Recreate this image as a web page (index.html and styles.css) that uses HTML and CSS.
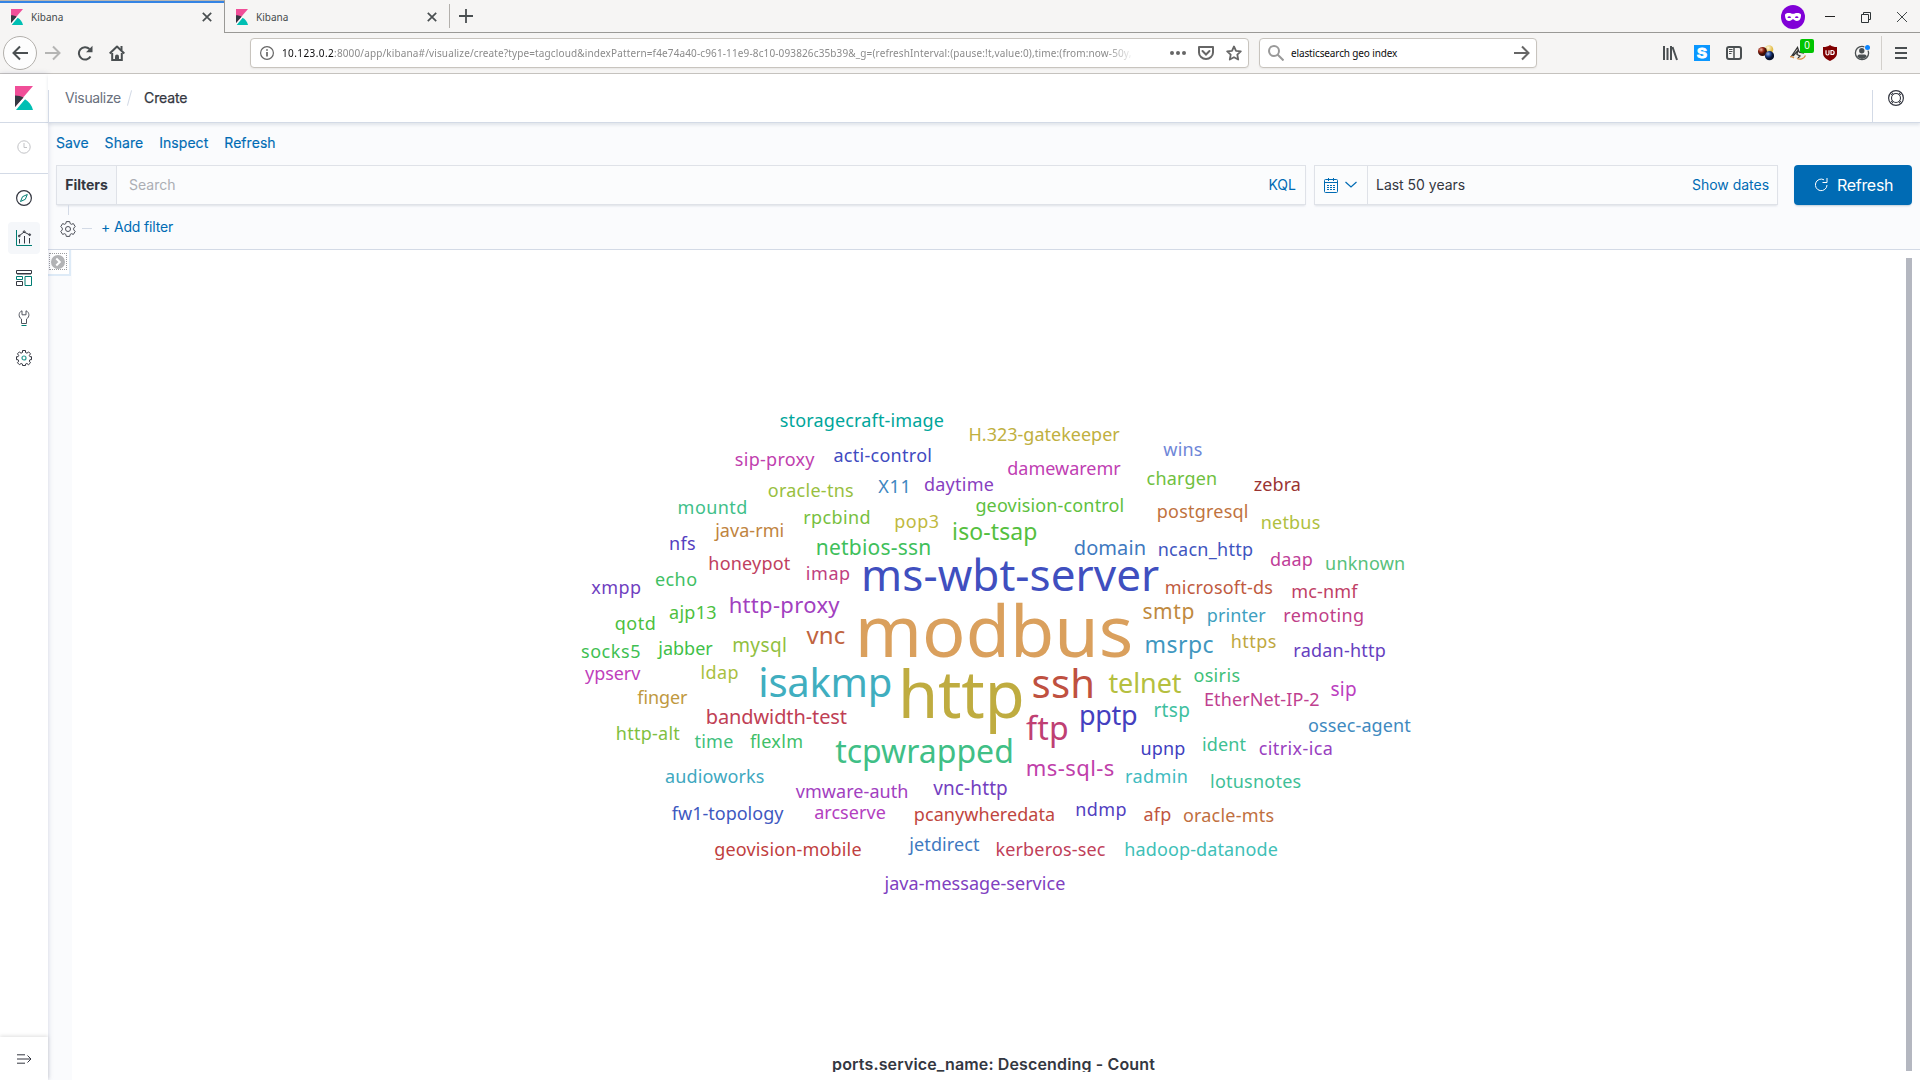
FILE: index.html
```html
<!DOCTYPE html>
<html lang="en">
<head>
<meta charset="utf-8">
<title>Kibana</title>
<link rel="stylesheet" href="styles.css">
</head>
<body>
<svg class="defs" width="0" height="0">
  <symbol id="kibana" viewBox="0 0 18 24">
    <path fill="#f04e98" d="M0 0h18L0 21z"/>
    <path fill="#343741" d="M0 9.500c3.300 0 6.400.9 8.500 2L0 21z"/>
    <path fill="#00bfb3" d="M10 13.200c3.900 2.300 7 6.200 8 10.800H1z"/>
    <path stroke="#fff" stroke-width="1.200" d="M0 22.800 10.500 11"/>
  </symbol>
  <symbol id="close" viewBox="0 0 10 10"><path d="m.8.8 8.400 8.400M9.200.8.8 9.200" stroke="#4a4f51" stroke-width="1.700"/></symbol>
</svg>

<header class="browser">
  <div class="tabs">
    <div class="tab tab-active"><svg class="favicon"><use href="#kibana"/></svg><span>Kibana</span><svg class="tab-close"><use href="#close"/></svg></div>
    <div class="tab tab-second"><svg class="favicon"><use href="#kibana"/></svg><span>Kibana</span><svg class="tab-close"><use href="#close"/></svg></div>
    <div class="tab-rest">
      <svg class="new-tab" viewBox="0 0 14 14"><path d="M7 0v14M0 7h14" stroke="#4a4f51" stroke-width="1.800"/></svg>
      <div class="window-controls">
        <svg width="24" height="24" viewBox="0 0 24 24"><circle cx="12" cy="12" r="12" fill="#8000d7"/><path fill="#fff" fill-rule="evenodd" d="M4 10c0-1.500 2-2 4-2 1.700 0 2.800.8 4 .8S14.300 8 16 8c2 0 4 .5 4 2 0 3-1.200 6-4 6-2 0-2.800-1.800-4-1.800S10 16 8 16c-2.800 0-4-3-4-6zm2.300 2.200c1.200 1.200 2.800 1.200 3.900 0-1.100-1.300-2.700-1.300-3.900 0zm7.500 0c1.100 1.200 2.700 1.200 3.900 0-1.200-1.300-2.800-1.300-3.900 0z"/></svg>
        <svg width="12" height="12" viewBox="0 0 12 12"><path d="M1 5.500h10" stroke="#222"/></svg>
        <svg width="12" height="12" viewBox="0 0 12 12" fill="none" stroke="#2e3436"><path d="M1.500 3.500h7v8h-7zM3.500 3.500v-2h7v7h-2"/></svg>
        <svg width="12" height="12" viewBox="0 0 12 12"><path d="m1 1 10 10M11 1 1 11" stroke="#2e3436" stroke-width=".9"/></svg>
      </div>
    </div>
  </div>
  <div class="toolbar">
    <div class="nav">
      <span class="back"><svg width="16" height="16" viewBox="0 0 16 16" fill="none" stroke="#4a4f51" stroke-width="2"><path d="M16 8H1.500M8 1.500 1.500 8 8 14.500"/></svg></span>
      <svg width="16" height="16" viewBox="0 0 16 16" fill="none" stroke="#b5b5b4" stroke-width="2"><path d="M0 8h14.500M8 1.500 14.500 8 8 14.500"/></svg>
      <svg width="16" height="16" viewBox="0 0 16 16" fill="none" stroke="#4a4f51" stroke-width="2"><path d="M13.500 11.500A6.200 6.200 0 1 1 12.500 4"/><path fill="#4a4f51" stroke="none" d="M15.500.8V7.200H9z"/></svg>
      <svg width="16" height="16" viewBox="0 0 16 16" fill="none" stroke="#4a4f51" stroke-width="2"><path d="m.7 8.500 7.300-7 7.300 7" stroke-linejoin="round"/><path d="M3.200 8v7h9.600V8"/><path d="M6 16v-4.500a2 2 0 0 1 4 0V16z" fill="#4a4f51" stroke="none"/><path d="M12.500 1v4"/></svg>
    </div>
    <div class="url">
      <svg width="14" height="14" viewBox="0 0 14 14" fill="none" stroke="#666"><circle cx="7" cy="7" r="6.400" stroke-width="1.200"/><path d="M7 6v4.500M7 3.300v1.500" stroke-width="1.700"/></svg>
      <span class="address"><b>10.123.0.2</b>:8000/app/kibana#/visualize/create?type=tagcloud&amp;indexPattern=f4e74a40-c961-11e9-8c10-093826c35b39&amp;_g=(refreshInterval:(pause:!t,value:0),time:(from:now-50y,</span>
      <span class="url-actions">
        <svg width="16" height="16" viewBox="0 0 16 16" fill="#666"><circle cx="2" cy="8" r="2"/><circle cx="8" cy="8" r="2"/><circle cx="14" cy="8" r="2"/></svg>
        <svg width="16" height="16" viewBox="0 0 16 16" fill="none" stroke="#666" stroke-width="2"><path d="M1 2h14v5.500a7 6.500 0 0 1-14 0z" stroke-linejoin="round"/><path d="M4.500 6 8 9.500 11.500 6" stroke-linecap="round"/></svg>
        <svg width="16" height="16" viewBox="0 0 16 16" fill="none" stroke="#666" stroke-width="1.800" stroke-linejoin="round"><path d="m8 1.500 2 4.300 4.800.6-3.500 3.300.9 4.800L8 12.200l-4.200 2.300.9-4.800L1.200 6.400 6 5.800z"/></svg>
      </span>
    </div>
    <div class="search">
      <svg width="16" height="16" viewBox="0 0 16 16" fill="none" stroke="#999" stroke-width="2"><circle cx="6" cy="6" r="5"/><path d="m9.500 9.500 6 6"/></svg>
      <span>elasticsearch geo index</span>
      <svg width="16" height="16" viewBox="0 0 16 16" fill="none" stroke="#666" stroke-width="2"><path d="M0 8h14.500M8 1.500 14.500 8 8 14.500"/></svg>
    </div>
    <div class="extensions">
      <svg viewBox="0 0 16 16" fill="none" stroke="#4a4f51" stroke-width="2"><path d="M2 1v14M5.500 3v12M9 1v14M10.500 2l4.500 13"/></svg>
      <svg viewBox="0 0 16 16"><path fill="#0a97ff" d="M0 0h16v16H0z"/><text x="8" y="13" class="ext-s">S</text></svg>
      <svg viewBox="0 0 16 16" fill="none" stroke="#4a4f51"><rect x="1" y="2" width="14" height="12" rx="2" stroke-width="2"/><path d="M8 2v12" stroke-width="1.500"/><path d="M3 4.500h3.500M3 6.500h3.500M3 8.500h2.500"/></svg>
      <svg viewBox="0 0 16 16"><defs><radialGradient id="ry" cx=".4" cy=".3"><stop stop-color="#fffbe0"/><stop offset="1" stop-color="#e3bd49"/></radialGradient><radialGradient id="rr" cx=".35" cy=".3"><stop stop-color="#f2b6a5"/><stop offset=".6" stop-color="#902211"/><stop offset="1" stop-color="#3c0d06"/></radialGradient><radialGradient id="rb" cx=".35" cy=".3"><stop stop-color="#9db7e8"/><stop offset=".6" stop-color="#1d3d86"/><stop offset="1" stop-color="#07122e"/></radialGradient></defs><circle cx="11" cy="4.500" r="4.300" fill="url(#ry)"/><circle cx="4.500" cy="6.500" r="4.500" fill="url(#rr)"/><circle cx="11.500" cy="10.700" r="4.600" fill="url(#rb)"/></svg>
      <span class="badged"><svg viewBox="0 0 16 16"><path d="M1 12 7.500 2.500 10 7l5 1 .5 4-3.500 2H7z" fill="#f1eee8"/><path d="M1 12 7.500 2.500 9 7M3 11l4.500-5L7 9.500 10 11l-2 2M9 7l5 1" fill="none" stroke="#333" stroke-width="1.300"/><path d="M0 12c2-1 3 .5 4 1M7 13.500c3 1.500 7 .5 8.500-3" fill="none" stroke="#d98a3c" stroke-width="1.200"/></svg><i>0</i></span>
      <svg viewBox="0 0 16 16"><path fill="#800000" d="M8 0c2 1.500 4 2 7 2v6c0 4-3 6-7 8-4-2-7-4-7-8V2c3 0 5-.5 7-2z"/><path d="M4 5.200v3.300c0 2 3 2 3 0V5.200M9 5.500v4h1.200c2.600 0 2.600-4 0-4z" fill="none" stroke="#fff" stroke-width="1.200"/></svg>
      <svg viewBox="0 0 16 16"><circle cx="8" cy="8" r="6.600" fill="none" stroke="#4a4f51" stroke-width="1.300"/><circle cx="7.800" cy="5.800" r="2.700" fill="#4a4f51"/><path d="M3.200 11.500c.6-2.200 2-2 4.800-2s4.200-.2 4.800 2A6 6 0 0 1 3.200 11.500z" fill="#4a4f51"/><circle cx="13.500" cy="2.500" r="3.200" fill="#f6f5f4"/><circle cx="13.500" cy="2.500" r="2.500" fill="#0a84ff"/></svg>
    </div>
    <div class="menu"><svg width="12" height="14" viewBox="0 0 12 14"><path d="M0 2h12M0 7h12M0 12h12" stroke="#4a4f51" stroke-width="2"/></svg></div>
  </div>
</header>

<div class="app">
  <aside class="sidebar">
    <div class="logo"><svg width="18" height="24"><use href="#kibana"/></svg></div>
    <div class="recent"><svg width="14" height="14" viewBox="0 0 14 14" fill="none" stroke="#c2c3c6"><circle cx="7" cy="7" r="6.200"/><path d="M7 3v4.500h3"/></svg></div>
    <nav class="apps">
      <a><svg viewBox="0 0 16 16" fill="none"><circle cx="8" cy="8" r="7.400" stroke="#343741" stroke-width="1.200"/><path d="m11.300 4.500-2 4.800-4.800 2.200 2-4.800z" stroke="#017d73"/></svg></a>
      <a class="on"><svg viewBox="0 0 16 16" fill="none" stroke="#343741"><path d="M.5 0v15.500H16" stroke="#017d73"/><path d="M3.500 9v4.500M8.500 6v7.500M13.500 8v5.500"/><path d="m3 6 5-4 6 3"/><circle cx="3.200" cy="6" r=".9"/><circle cx="8.200" cy="1.700" r=".9"/><circle cx="13.700" cy="4.700" r=".9"/></svg></a>
      <a><svg viewBox="0 0 16 16" fill="none" stroke="#343741"><path d="M.5.5h15v3H.5z"/><path d="M1 4.500h14" stroke="#999ba0"/><path d="M.5 6.500h6v3h-6zM9 6.500h6.500v9H9z" stroke="#017d73"/><path d="M.5 11.500h6v4h-6z"/></svg></a>
      <a><svg viewBox="0 0 16 16" fill="none" stroke="#535660"><path d="M6 .8C2.500 2 2 7 5.500 9v4.500h5V9C14 7 13.500 2 10 .8v4H6z"/><path d="M5.500 15.500h5" stroke="#017d73"/></svg></a>
      <a><svg viewBox="0 0 16 16" fill="none" stroke="#343741"><path d="M6.500.5h3v2l1.500.7 1.600-1.300 1.900 1.900-1.200 1.700.6 1.200h1.600v3h-1.600l-.6 1.400 1.200 1.700-1.900 1.900-1.700-1.200-1.400.6v1.400h-3v-1.400l-1.400-.6-1.700 1.200-1.900-1.900 1.200-1.700L2.100 9.700H.5v-3h1.600l.6-1.200L1.500 3.800l1.900-1.900L5 3.200l1.500-.7z"/><circle cx="8" cy="8" r="2" stroke="#2a9b92" stroke-width="1.200"/></svg></a>
    </nav>
    <div class="expand"><svg width="15" height="10" viewBox="0 0 15 10" fill="none" stroke="#343741"><path d="M0 .8h8M0 5h13.500M0 9.200h8M10.500 1.500 14 5l-3.500 3.500"/></svg></div>
  </aside>

  <main class="main">
    <div class="crumbs">
      <span class="crumb">Visualize</span><i class="slash"></i><span class="crumb-now">Create</span>
      <span class="help"><svg width="16" height="16" viewBox="0 0 16 16" fill="none" stroke="#343741"><circle cx="8" cy="8" r="7.400" stroke-width="1.200"/><circle cx="8" cy="8" r="4.500" stroke-width="1.100"/><path d="m2.500 3.500 2.200 2M3.500 2.500l2.200 2M13.500 3.500l-2.200 2M12.500 2.500l-2.200 2M2.500 12.500l2.200-2M3.500 13.500l2.200-2M13.500 12.500l-2.200-2M12.500 13.500l-2.200-2"/></svg></span>
    </div>
    <section class="query">
      <div class="actions"><a>Save</a><a>Share</a><a>Inspect</a><a>Refresh</a></div>
      <div class="bar">
        <div class="box query-box"><b>Filters</b><span class="placeholder">Search</span><a>KQL</a></div>
        <div class="box date-box">
          <span class="calendar">
            <svg width="14" height="15" viewBox="0 0 14 15" fill="none" stroke="#006bb4"><rect x=".5" y="1.500" width="13" height="13" rx="1"/><path d="M1 4.500h12M4.500 0v3M9.500 0v3"/><path d="M3 7.500h8M3 9.500h8M3 11.500h8" stroke-dasharray="2 1"/></svg>
            <svg width="12" height="8" viewBox="0 0 12 8" fill="none" stroke="#006bb4"><path d="m.5 1 5.500 5 5.500-5" stroke-width="1.200"/></svg>
          </span>
          <span class="range">Last 50 years</span><a>Show dates</a>
        </div>
        <button class="refresh"><svg width="13" height="14" viewBox="0 0 13 14" fill="none" stroke="#fff"><path d="M9 1.800A5.800 5.800 0 1 0 12 7M12 0v4.500H7.500"/></svg>Refresh</button>
      </div>
      <div class="filters">
        <svg width="16" height="16" viewBox="0 0 16 16" fill="none" stroke="#4b4e57"><path d="M6.300.6h3.400l.5 2 1.200.7 2-.7 1.800 3-1.500 1.500v1.800l1.500 1.500-1.800 3-2-.7-1.200.7-.5 2H6.300l-.5-2-1.200-.7-2 .7-1.800-3 1.500-1.500V7.100L.8 5.600l1.800-3 2 .7 1.200-.7z" stroke-linejoin="round"/><circle cx="8" cy="8" r="2.500"/></svg>
        <i class="dash"></i><a>+ Add filter</a>
      </div>
    </section>
    <section class="visual">
      <div class="gutter"><div class="toggle"><span><svg width="14" height="14" viewBox="0 0 14 14"><circle cx="7" cy="7" r="7" fill="#b2b3b5"/><path d="m5.300 3.500 3.500 3.500-3.500 3.500" fill="none" stroke="#fff" stroke-width="2"/></svg></span></div></div>
      <div class="panel">
        <svg id="cloud" width="1834" height="800" viewBox="72 250 1834 800"></svg>
        <div class="caption">ports.service_name: Descending - Count</div>
      </div>
      <div class="scroll"></div>
    </section>
  </main>
</div>
<script src="cloud.js"></script>
</body>
</html>
```
FILE: styles.css
```css
* { box-sizing: border-box; }
body { margin: 0; width: 1920px; height: 1080px; overflow: hidden; background: #fff; color: #343741; font: 14px/20px Inter, "Liberation Sans", sans-serif; }
svg { display: block; flex: none; }
a { color: #006bb4; }
.defs { position: absolute; }

.browser { height: 74px; background: #f6f5f4; border-bottom: 1px solid #c6c3bf; font: 10px/14px "Noto Sans", sans-serif; color: #43484a; }
.tabs { display: flex; height: 33px; }
.tab { display: flex; align-items: center; width: 225px; padding: 0 12px 0 11px; }
.tab-active span { margin-left: 9px; }
.tab span { flex: 1; margin-left: 8px; }
.tab-active { border-top: 1px solid #b9b6b2; border-right: 1px solid #9a9996; box-shadow: inset 0 2px #3584e4; }
.tab-second, .tab-rest { border-bottom: 1px solid #9a9996; }
.tab-second { padding-top: 1px; padding-right: 13px; }
.favicon { width: 12px; height: 16px; }
.tab-close { width: 10px; height: 10px; }
.tab-rest { flex: 1; display: flex; align-items: center; justify-content: space-between; padding: 0 12px 0 0; }
.tab-rest::before { content: ""; width: 1px; height: 24px; background: #b3b0ac; margin-left: -1px; }
.new-tab { width: 14px; height: 14px; margin: 0 auto 0 9px; }
.window-controls { display: flex; align-items: center; gap: 24px; padding-top: 1px; }
.window-controls svg:first-child { margin-right: -5px; }

.toolbar { display: flex; align-items: center; height: 40px; }
.nav { display: flex; align-items: center; gap: 16px; width: 250px; padding-left: 3px; }
.back { display: grid; place-items: center; width: 34px; height: 34px; margin-right: -8px; border: 1px solid #b3b0ac; border-radius: 50%; background: #fdfdfd; }
.url, .search { display: flex; align-items: center; height: 30px; background: #fff; border: 1px solid #c8c4be; border-radius: 4px; box-shadow: 0 1px 2px rgba(0,0,0,.06); }
.url { width: 999px; padding: 0 6px 0 9px; }
.address { width: 855px; margin-left: 8px; overflow: hidden; white-space: nowrap; color: #8b8b8b; letter-spacing: .13px; -webkit-mask-image: linear-gradient(90deg, #000 825px, transparent 853px); mask-image: linear-gradient(90deg, #000 825px, transparent 853px); }
.address b { font-weight: 400; color: #0c0c0d; letter-spacing: .4px; }
.url-actions { display: flex; gap: 12px; margin-left: auto; }
.search { width: 278px; margin-left: 10px; padding: 0 6px 0 8px; color: #0c0c0d; }
.search span { flex: 1; margin-left: 7px; letter-spacing: -.13px; }
.extensions { display: flex; gap: 16px; margin-left: 125px; }
.extensions svg { width: 16px; height: 16px; }
.ext-s { font: 700 15px "Liberation Sans", sans-serif; fill: #fff; stroke: #fff; text-anchor: middle; }
.badged { position: relative; }
.badged i { position: absolute; left: 10px; top: -6px; width: 14px; height: 14px; border-radius: 2px; background: #00c400; color: #fff; font: 10px/13px "Liberation Sans", sans-serif; text-align: center; }
.menu { display: flex; align-items: center; height: 34px; margin-left: 11px; padding-left: 13px; border-left: 1px solid #d3d0cc; }

.app { display: flex; height: 1006px; }
.sidebar { position: relative; z-index: 2; display: flex; flex-direction: column; width: 48px; background: #fff; box-shadow: 0 0 5px rgba(105,112,155,.28); }
.logo { display: grid; place-items: center; height: 49px; border-bottom: 1px solid #d3dae6; background: #fff; }
.recent { display: grid; place-items: center; height: 51px; padding: 0 1px 2px 0; border-bottom: 1px solid #d3dae6; }
.apps { display: flex; flex-direction: column; gap: 8px; padding: 8px; flex: 1; }
.apps a { display: grid; place-items: center; width: 32px; height: 32px; border-radius: 4px; }
.apps .on { background: #f5f7fa; }
.apps svg { width: 16px; height: 16px; }
.expand { display: grid; place-items: center; height: 43px; background: #fff; box-shadow: 0 -1px 4px rgba(0,0,0,.13); }
.main { flex: 1; display: flex; flex-direction: column; min-width: 0; }

.crumbs { position: relative; z-index: 3; display: flex; align-items: center; height: 49px; background: #fff; border-bottom: 1px solid #d3dae6; box-shadow: 0 2px 3px rgba(152,162,179,.25); }
.crumbs::before { content: ""; align-self: flex-end; width: 1px; height: 32px; background: #d3dae6; margin-right: 16px; }
.crumb { color: #69707d; width: 56px; letter-spacing: -.35px; }
.slash { width: 1px; height: 16px; margin: 0 14px 0 8px; background: #d3dae6; transform: rotate(15deg); }
.crumb-now { letter-spacing: -.1px; -webkit-text-stroke: .25px; }
.help { display: flex; align-items: center; align-self: flex-end; height: 32px; margin-left: auto; padding: 0 16px 16px 15px; border-left: 1px solid #d3dae6; }
.query { height: 127px; padding: 10px 8px 0; background: #fafbfd; border-bottom: 1px solid #d3dae6; }
.actions { display: flex; gap: 16px; height: 32px; letter-spacing: .05px; -webkit-text-stroke: .15px #006bb4; }
.bar { display: flex; height: 40px; }
.box { display: flex; align-items: center; border: 1px solid #dfe2e8; background: #fbfcfd; box-shadow: 0 2px 2px -1px rgba(152,162,179,.3); }
.query-box { width: 1250px; padding-right: 9px; }
.query-box b { display: grid; place-items: center; width: 60px; height: 100%; font-weight: 700; letter-spacing: -.05px; border-right: 1px solid #dfe2e8; background: #f5f7fa; }
.placeholder { flex: 1; padding-left: 12px; color: #abaeb4; }
.date-box { width: 464px; margin-left: 8px; padding-right: 8px; }
.date-box a { letter-spacing: -.03px; }
.calendar { display: flex; align-items: center; gap: 7px; width: 53px; height: 100%; padding-left: 9px; border-right: 1px solid #dfe2e8; }
.range { flex: 1; padding-left: 8px; letter-spacing: -.02px; }
.refresh { display: flex; align-items: center; gap: 9px; width: 118px; margin-left: 16px; padding: 0 0 0 21px; border: 0; border-radius: 4px; background: #006bb4; color: #fff; font: 16px/20px Inter, sans-serif; letter-spacing: -.3px; box-shadow: 0 2px 2px -1px rgba(54,97,126,.3); }
.filters { position: relative; display: flex; align-items: center; height: 44px; padding: 3px 0 0 4px; }
.filters::before { content: ""; position: absolute; left: 12px; top: 0; width: 1px; height: 10px; background: #d3dae6; }
.dash { width: 10px; height: 1px; margin: 0 9px 0 6px; background: #d3dae6; }
.filters a { letter-spacing: -.15px; padding-bottom: 4px; }

.visual { flex: 1; display: flex; min-height: 0; }
.gutter { width: 24px; background: #fafbfd; }
.toggle { width: 23px; height: 26px; padding: 3px 0 0 1px; border: solid #deebf7; border-width: 0 2px 2px 0; background: #fff; }
.toggle span { display: grid; place-items: center; width: 18px; height: 17px; border: 1px dotted #9a9b9e; }
.panel { display: flex; flex-direction: column; width: 1834px; }
.caption { height: 22px; margin-right: -9px; padding-top: 2px; overflow: hidden; text-align: center; font: 600 16px/24px Inter, sans-serif; letter-spacing: .14px; }
.scroll { width: 6px; height: 813px; margin-top: 8px; background: #b4b7c0; }
#cloud text { font-family: "Noto Sans", sans-serif; text-anchor: middle; }
```
FILE: cloud.js
```js
// word | font size | set width as a font size | x | baseline | hue or colour
const tags = `storagecraft-image|18|18.3|861.4|427|#00a69b
sip-proxy|18|18.5|774.2|466|308
acti-control|18|18.6|882.2|462|235
oracle-tns|18|18.5|810.2|497|78
X11|18|18.7|894|493|207
daytime|18|18.4|958.4|491|274
mountd|18|18.6|712|514|155
rpcbind|18|18.6|836.4|524|94
pop3|18|18.6|916.2|528|57
java-rmi|18|18.1|749.2|537|32
nfs|18|18.4|681.8|550|250
netbios-ssn|21|21.4|873|555|133
iso-tsap|23|23.2|994.3|540|110
honeypot|18|18.3|748.8|570|345
imap|18|18.7|827.5|580|330
echo|18|18.6|675.5|586|137
xmpp|18|18.5|615.7|594|262
http-proxy|22|22.6|783.6|613|286
ajp13|18|18.4|692.3|619|114
qotd|18|18.8|634.8|630|114
vnc|24|24.1|825.4|644|17
socks5|18|18.9|610.2|658|129
jabber|18|18|685|655|124
mysql|19|19.6|759.1|652|82
ms-wbt-server|44|44.1|1009.7|591|233
modbus|72|72|993.5|657|#daa05d
H.323-gatekeeper|18|18|1043.6|441|53
damewaremr|18|18|1063.5|475|306
wins|18|18.3|1182.4|456|#6f87d8
chargen|18|18.3|1181.4|485|98
zebra|18|18.1|1276.9|491|#9a3432
geovision-control|18|18.3|1049.3|512|106
postgresql|18|18.4|1202.1|518|24
netbus|18|18.3|1290|529|67
domain|20|20.1|1109.4|555|213
ncacn_http|18|18.5|1204.9|556|230
daap|18|18.2|1290.9|566|318
unknown|18|18.3|1364.6|570|#57c17b
microsoft-ds|18|18.4|1218.3|594|13
mc-nmf|18|18.2|1323.9|598|342
smtp|21|21.7|1167.9|619|35
printer|18|18.2|1235.7|622|195
remoting|18|18.6|1323.2|622|326
msrpc|23|23.6|1178.6|653|199
https|18|18.8|1253.1|648|49
radan-http|18|18.4|1339.1|657|258
ypserv|18|17.9|612.2|680|302
ldap|18|18.5|719|679|70
isakmp|40|39.6|824.8|697|188
finger|18|17.9|661.8|704|42
bandwidth-test|20|19.8|775.9|724|350
http|65|64.8|960.8|718|51
http-alt|18|18.5|647.3|740|90
time|18|18.4|713.4|748|149
flexlm|18|18.5|776|748|139
tcpwrapped|32|32|924|763|153
audioworks|18|18.2|714.2|783|191
vmware-auth|18|18.1|851.6|798|286
vnc-http|19|19.2|970|795|264
fw1-topology|18|18|727.1|820|228
arcserve|18|18.1|849.5|819|294
pcanywheredata|18|18.1|984|821|3
geovision-mobile|18|18.3|787.4|856|0
jetdirect|18|18.2|943.9|851|213
java-message-service|18|18.1|974.4|890|270
telnet|27|26.8|1144.5|693|65
osiris|18|18.7|1216.2|682|147
EtherNet-IP-2|18|18.2|1261.3|706|322
sip|19|19.4|1343|696|298
ssh|40|40.2|1062.8|698|8
pptp|27|26.6|1107.8|725|242
rtsp|19|19.6|1171.2|717|165
ftp|32|32.4|1046.9|740|336
ossec-agent|18|18.2|1358.9|732|205
upnp|18|18.2|1162.4|755|240
ident|18|18.2|1223.4|751|159
citrix-ica|18|18.9|1295.3|755|282
ms-sql-s|22|22.8|1069.5|776|310
radmin|18|18.6|1156|783|182
lotusnotes|18|18.4|1255.1|788|161
ndmp|18|18.4|1100.4|816|248
afp|18|18.2|1156.9|821|10
oracle-mts|18|18.4|1228|822|22
kerberos-sec|18|18.3|1049.9|856|348
hadoop-datanode|18|18.2|1200.6|856|176`;

const cloud = document.getElementById('cloud');
for (const line of tags.split('\n')) {
  const [word, size, fit, x, y, color] = line.split('|');
  const el = document.createElementNS('http://www.w3.org/2000/svg', 'text');
  el.textContent = word;
  el.setAttribute('x', +x + 0.5);
  el.setAttribute('y', y);
  el.setAttribute('font-size', size);
  el.setAttribute('fill', color[0] === '#' ? color : `hsl(${color},50%,50%)`);
  cloud.append(el);
  el.setAttribute('textLength', el.getComputedTextLength() * fit / size);
}
```
